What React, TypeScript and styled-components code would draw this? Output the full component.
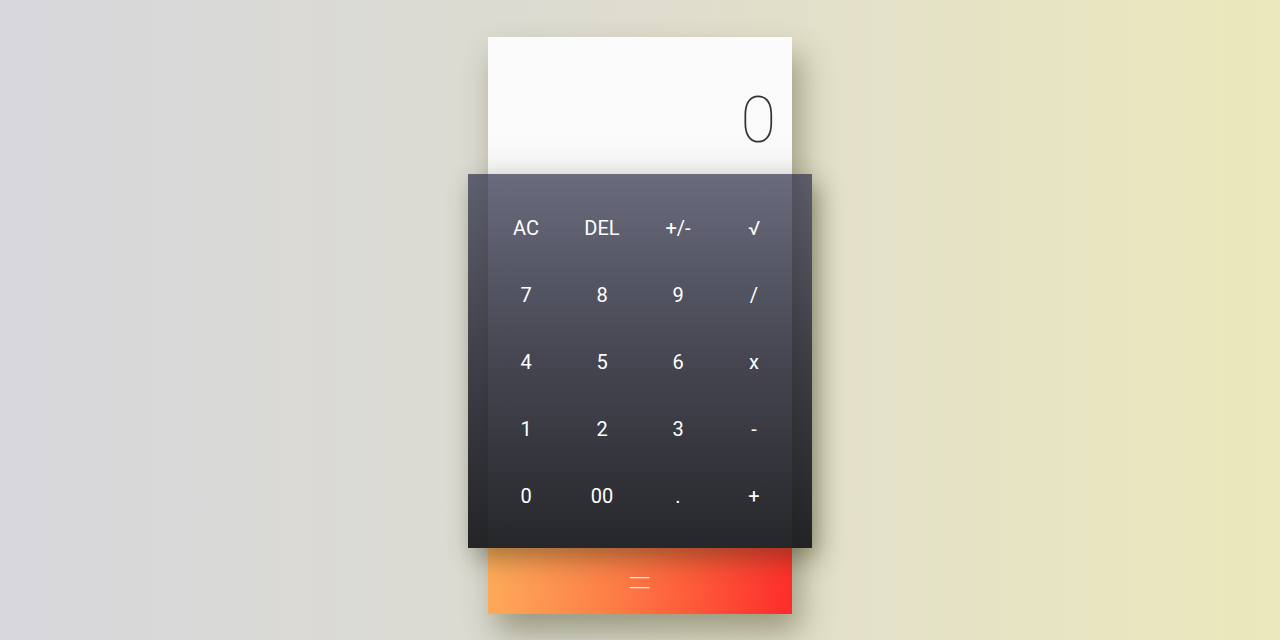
import React from "react";
import styled, { createGlobalStyle } from "styled-components";

const Global = createGlobalStyle`
  html, body { margin: 0; padding: 0; }
  body {
    width: 1280px;
    height: 640px;
    overflow: hidden;
    font-family: Roboto, "Liberation Sans", sans-serif;
    background: linear-gradient(to right, #d7d7dc 0%, #dddcd0 45%, #ece8bc 100%);
  }
`;

const Page = styled.div`
  width: 1280px;
  height: 640px;
  display: flex;
  justify-content: center;
  align-items: flex-start;
  padding-top: 37px;
  box-sizing: border-box;
`;

const Calculator = styled.div`
  width: 304px;
  display: flex;
  flex-direction: column;
  background: #fafafa;
  box-shadow: 8px 18px 30px rgba(70, 70, 30, 0.45);
`;

const Display = styled.div`
  height: 137px;
  display: flex;
  align-items: flex-start;
  justify-content: flex-end;
  padding: 51px 16px 0 0;
  box-sizing: border-box;
  background: linear-gradient(to bottom, #fbfbfb 0%, #fafafa 75%, #f3f3f3 100%);
  color: #333;
  font-family: Roboto, "Liberation Sans", sans-serif;
  font-weight: 100;
  font-size: 65px;
  line-height: 65px;
`;

const Keypad = styled.div`
  margin: 0 -20px;
  height: 374px;
  padding: 20px 20px;
  box-sizing: border-box;
  display: grid;
  grid-template-columns: repeat(4, 76px);
  grid-template-rows: repeat(5, 67px);
  background: linear-gradient(
    to bottom,
    rgba(44, 46, 72, 0.7) 0%,
    rgba(32, 33, 46, 0.83) 50%,
    rgba(22, 23, 26, 0.93) 100%
  );
  box-shadow: 6px 10px 24px rgba(50, 50, 20, 0.45);
  position: relative;
  z-index: 1;
`;

const Key = styled.button`
  border: none;
  background: transparent;
  color: #ffffff;
  font-family: Roboto, "Liberation Sans", sans-serif;
  font-size: 20px;
  font-weight: 400;
  display: flex;
  align-items: center;
  justify-content: center;
  padding: 0;
  cursor: pointer;
`;

const Equals = styled.button`
  height: 66px;
  border: none;
  padding: 4px 0 0 0;
  display: flex;
  align-items: center;
  justify-content: center;
  background: linear-gradient(100deg, #fdad5b 0%, #fd7a45 45%, #fd2c2a 100%);
  color: rgba(255, 255, 255, 0.85);
  font-family: Roboto, "Liberation Sans", sans-serif;
  font-weight: 100;
  font-size: 48px;
  line-height: 48px;
  cursor: pointer;
`;

const keys = [
  "AC", "DEL", "+/-", "√",
  "7", "8", "9", "/",
  "4", "5", "6", "x",
  "1", "2", "3", "-",
  "0", "00", ".", "+",
];

export default function App() {
  return (
    <>
      <Global />
      <Page>
        <Calculator>
          <Display>0</Display>
          <Keypad>
            {keys.map((k) => (
              <Key key={k}>{k}</Key>
            ))}
          </Keypad>
          <Equals>=</Equals>
        </Calculator>
      </Page>
    </>
  );
}
